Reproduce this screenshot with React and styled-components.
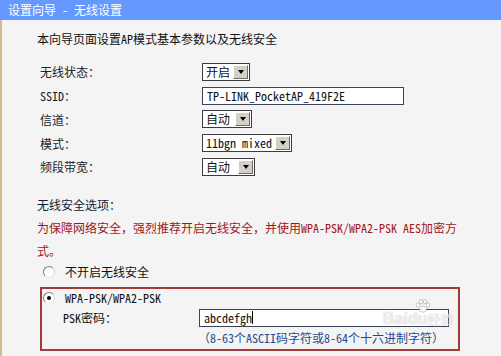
import styled, { createGlobalStyle } from 'styled-components';

const GlobalStyle = createGlobalStyle`
  html, body {
    margin: 0;
    padding: 0;
    background: #f4f4f4;
  }

  body {
    font-family: "Noto Sans Mono CJK SC", "Noto Sans CJK SC", sans-serif;
    font-size: 12px;
    color: #111;
  }
`;

const Dropdown = ({ width, children }) => (
  <SelectBox width={width}>
    <SelectValue>{children}</SelectValue>
    <ArrowButton>
      <Triangle />
    </ArrowButton>
  </SelectBox>
);

// small paw print of the baidu watermark
const PawIcon = () => (
  <PawSvg width="16" height="14" viewBox="0 0 16 14">
    <g fill="rgba(255,255,255,0.85)" stroke="rgba(140,140,140,0.6)" strokeWidth="0.8">
      <ellipse cx="3" cy="6" rx="1.8" ry="2.2" />
      <ellipse cx="6" cy="2.6" rx="1.8" ry="2.2" />
      <ellipse cx="10" cy="2.6" rx="1.8" ry="2.2" />
      <ellipse cx="13" cy="6" rx="1.8" ry="2.2" />
      <path d="M8 7 C5 7 4 10.5 5 12 C6 13.5 10 13.5 11 12 C12 10.5 11 7 8 7 Z" />
    </g>
  </PawSvg>
);

const App = () => {
  return (
    <>
      <GlobalStyle />
      <Page>
        <Header>设置向导 - 无线设置</Header>
        <Body>
          <Intro>本向导页面设置AP模式基本参数以及无线安全</Intro>

          <Form>
            <Label>无线状态：</Label>
            <Field>
              <Dropdown width={48}>开启</Dropdown>
            </Field>
            <Label>SSID：</Label>
            <Field>
              <TextInput width={202}>TP-LINK_PocketAP_419F2E</TextInput>
            </Field>
            <Label>信道：</Label>
            <Field>
              <Dropdown width={50}>自动</Dropdown>
            </Field>
            <Label>模式：</Label>
            <Field>
              <Dropdown width={90}>11bgn mixed</Dropdown>
            </Field>
            <Label>频段带宽：</Label>
            <Field>
              <Dropdown width={53}>自动</Dropdown>
            </Field>
          </Form>

          <SectionTitle>无线安全选项：</SectionTitle>
          <Warning>
            为保障网络安全，强烈推荐开启无线安全，并使用WPA-PSK/WPA2-PSK AES加密方式。
          </Warning>

          <RadioRow>
            <Radio />
            <span>不开启无线安全</span>
          </RadioRow>

          <SecurityBox>
            <BoxRadioRow>
              <Radio checked />
              <span>WPA-PSK/WPA2-PSK</span>
            </BoxRadioRow>
            <PskLabel>PSK密码：</PskLabel>
            <PskField>
              <TextInput width={250}>
                abcdefgh
                <Caret />
              </TextInput>
            </PskField>
            <span />
            <Hint>（8-63个ASCII码字符或8-64个十六进制字符）</Hint>
            <Watermark>
              <PawIcon />
              Baidu<small>经验</small>
            </Watermark>
          </SecurityBox>
        </Body>
      </Page>
    </>
  );
};

export default App;

const Page = styled.div`
  display: flex;
  flex-direction: column;
  width: 501px;
  height: 356px;
  overflow: hidden;
  background: #f4f4f4;
`;

const Header = styled.div`
  height: 20px;
  padding-left: 8px;
  line-height: 20px;
  background: #6699ff;
  color: #fff;
  white-space: pre;
`;

const Body = styled.div`
  flex: 1;
  display: flex;
  flex-direction: column;
  padding: 7px 0 0 35px;
  border-left: 2px solid #d6b88c;
`;

const Intro = styled.div`
  height: 24px;
  line-height: 24px;
`;

const Form = styled.div`
  display: grid;
  grid-template-columns: 165px auto;
  grid-auto-rows: 23.75px;
  margin-top: 9px;
`;

const Label = styled.div`
  display: flex;
  align-items: center;
  padding-left: 3px;
  color: #1a2230;
`;

const Field = styled.div`
  display: flex;
  align-items: center;
`;

const SelectBox = styled.div`
  display: flex;
  align-items: center;
  box-sizing: border-box;
  width: ${(p) => p.width}px;
  height: 18px;
  border: 1px solid #3c3c3c;
  background: #fff;
`;

const SelectValue = styled.div`
  flex: 1;
  padding-left: 3px;
  line-height: 16px;
  white-space: nowrap;
`;

const ArrowButton = styled.div`
  display: flex;
  align-items: center;
  justify-content: center;
  box-sizing: border-box;
  width: 15px;
  height: 14px;
  margin-right: 1px;
  background: #d4d0c8;
  border: 1px solid;
  border-color: #fff #6b6b6b #6b6b6b #fff;
`;

const Triangle = styled.div`
  width: 0;
  height: 0;
  border-left: 3.5px solid transparent;
  border-right: 3.5px solid transparent;
  border-top: 4px solid #000;
`;

const TextInput = styled.div`
  display: flex;
  align-items: center;
  box-sizing: border-box;
  width: ${(p) => p.width}px;
  height: 18px;
  padding-left: 4px;
  border: 1px solid #3a4458;
  background: #fff;
  white-space: nowrap;
`;

const Caret = styled.span`
  display: inline-block;
  width: 1px;
  height: 13px;
  background: #000;
`;

const SectionTitle = styled.div`
  margin-top: 14px;
  line-height: 23px;
  color: #152235;
`;

const Warning = styled.div`
  width: 425px;
  line-height: 23px;
  color: #a3141a;
`;

const RadioRow = styled.div`
  display: flex;
  align-items: center;
  gap: 10px;
  height: 20px;
  padding-left: 6px;
`;

const Radio = styled.span`
  position: relative;
  box-sizing: border-box;
  width: 12px;
  height: 12px;
  border-radius: 50%;
  border: 1px solid;
  border-color: #7a7a7a #d8d8d8 #e8e8e8 #7a7a7a;
  background: #fff;

  &::after {
    content: '';
    display: ${(p) => (p.checked ? 'block' : 'none')};
    position: absolute;
    left: 3px;
    top: 3px;
    width: 4px;
    height: 4px;
    border-radius: 50%;
    background: #000;
  }
`;

const SecurityBox = styled.div`
  position: relative;
  display: grid;
  grid-template-columns: 156px auto;
  grid-template-rows: 18px 22px 18px;
  width: 420px;
  box-sizing: border-box;
  margin: 5px 0 0 3px;
  padding-bottom: 2px;
  border: 2px solid #a23a3a;
`;

const BoxRadioRow = styled.div`
  grid-column: 1 / -1;
  display: flex;
  align-items: center;
  gap: 10px;
  padding-left: 1px;
`;

const PskLabel = styled.div`
  display: flex;
  align-items: center;
  padding-left: 21px;
`;

const PskField = styled.div`
  display: flex;
  align-items: center;
  margin-left: 1px;
`;

const Hint = styled.div`
  display: flex;
  align-items: center;
  color: #1f4b91;
  white-space: nowrap;
`;

const Watermark = styled.div`
  position: absolute;
  left: 341px;
  top: 22px;
  font-family: "Liberation Sans", sans-serif;
  font-size: 16px;
  font-weight: bold;
  line-height: 16px;
  color: rgba(255, 255, 255, 0.75);
  text-shadow: 0 0 1px rgba(150, 150, 150, 0.7);
  pointer-events: none;

  small {
    font-family: "Noto Sans CJK SC", sans-serif;
    font-size: 13px;
    font-weight: normal;
  }
`;

const PawSvg = styled.svg`
  position: absolute;
  left: 32px;
  top: -12px;
`;
